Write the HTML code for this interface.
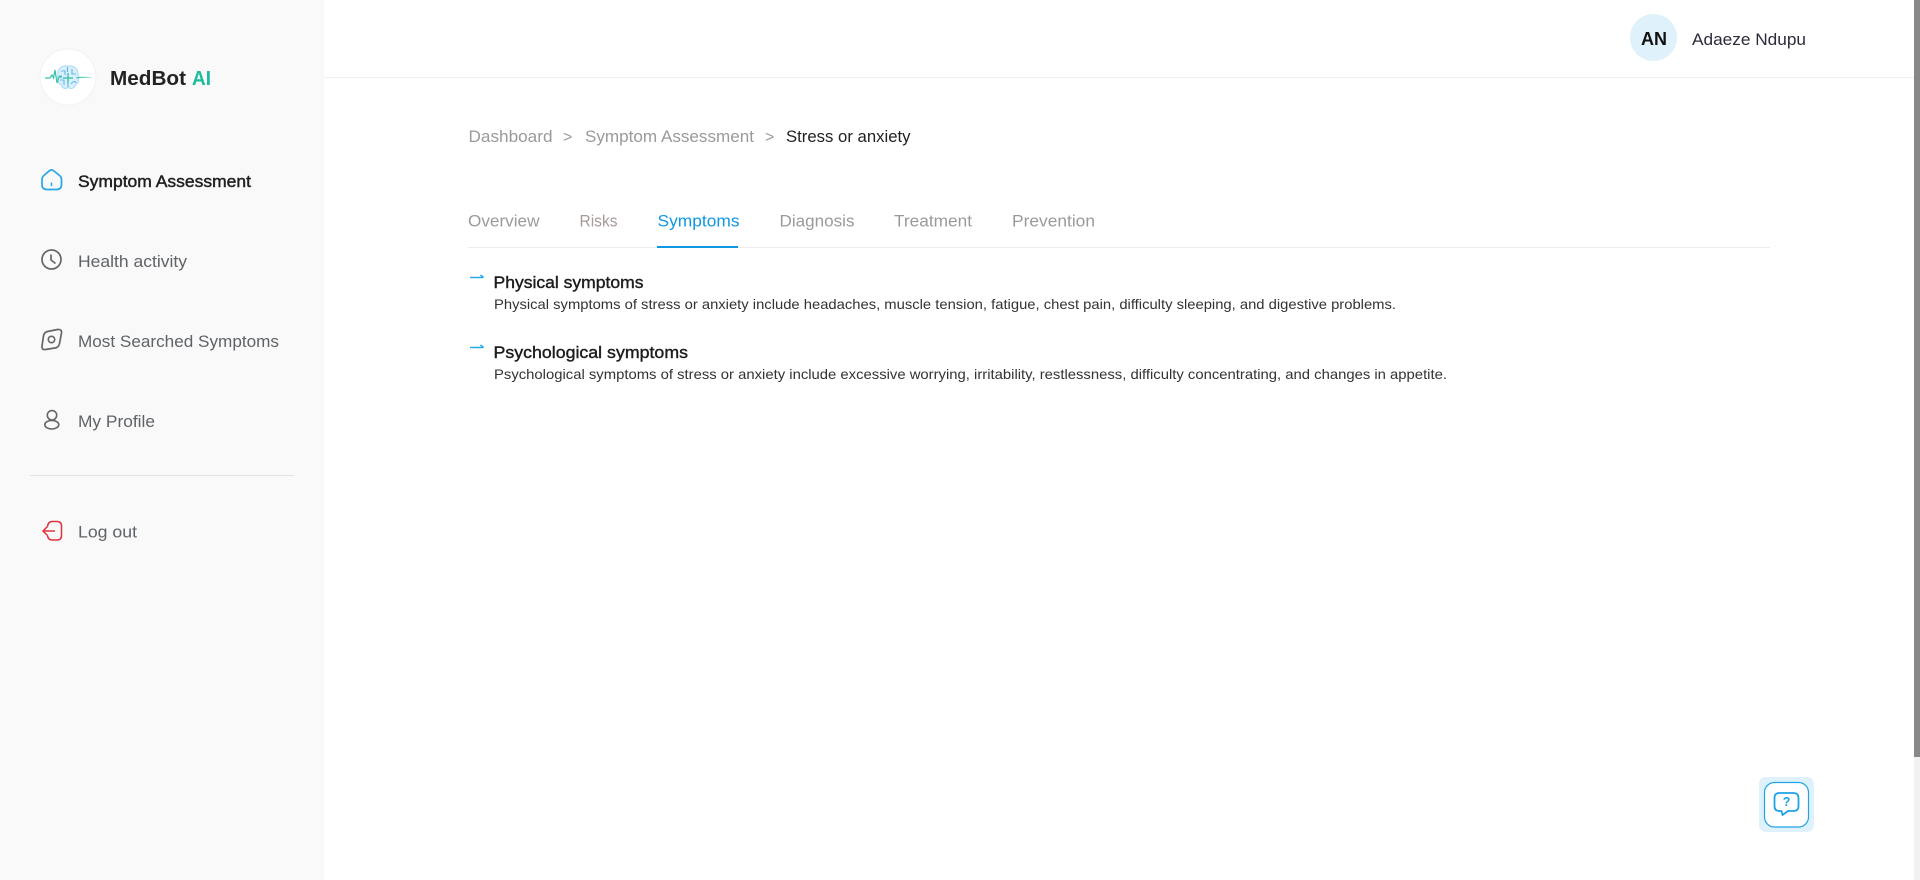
<!DOCTYPE html>
<html lang="en">
<head>
<meta charset="utf-8">
<title>MedBot AI</title>
<style>
html,body{margin:0;padding:0;width:1920px;height:880px;overflow:hidden;background:#fff}
svg{display:block;position:absolute;left:0;top:0}
text{font-family:"Liberation Sans",sans-serif}
</style>
</head>
<body>
<svg width="1920" height="880" viewBox="0 0 1920 880" xmlns="http://www.w3.org/2000/svg">
<defs>
<linearGradient id="p" x1="0" x2="1" y1="0" y2="0">
<stop offset="0" stop-color="#35c3a6"/>
<stop offset=".4" stop-color="#35c3a6"/>
<stop offset="1" stop-color="#bfeee4"/>
</linearGradient>
</defs>
<rect width="1920" height="880" fill="#fff"/>
<rect width="324" height="880" fill="#f9f9f9"/>
<rect x="324" y="77" width="1590" height="1" fill="#f0f0f0"/>
<rect x="1914" width="6" height="880" fill="#f1f1f1"/>
<rect x="1914" width="6" height="757" fill="#888"/>

<!-- logo -->
<circle cx="68" cy="77" r="28" fill="#fff" stroke="#f2f2f2"/>
<path d="M67 66C61 65 57.500 70 58 74C56.500 78 58 83 61 85C63 89.500 67 89 68 87C70 89.500 74 89 75.500 85C78.500 83 79.500 78 78 74C78.500 69 73 65 68 66Z" fill="#d9effb" stroke="#a6daf5" stroke-width="1"/>
<path d="M61 71H65V75M60 80H64V85M72 69V74H76M71 84C73 81 76 81 76 83M62 76H59M67.500 67V72M68 83V87" fill="none" stroke="#62b9ec" stroke-width="1.100"/>
<path d="M45 78H50L52 75L53.500 78L55 70L57 83L59 77H62" fill="none" stroke="#35c3a6" stroke-width="1.200"/>
<path d="M76 78C81 77 86 77 92 78" fill="none" stroke="url(#p)" stroke-width="1"/>
<path d="M63 78H73M68 73V83" fill="none" stroke="#33bfa5" stroke-width="1.300"/>
<text x="110" y="85" font-size="20" font-weight="700" fill="#222" textLength="76" lengthAdjust="spacingAndGlyphs">MedBot</text>
<text x="192" y="85" font-size="20" font-weight="700" fill="#1dbb9f" textLength="19" lengthAdjust="spacingAndGlyphs">AI</text>

<!-- nav icons -->
<path d="M42 179.500Q42 177 44 175.500L49 171Q51.500 168.800 54 171L59.500 175.500Q61.500 177 61.500 179.500V184.500Q61.500 189.500 56.500 189.500H47Q42 189.500 42 184.500Z" fill="none" stroke="#27a5e8" stroke-width="1.700"/>
<path d="M51.500 182.500V186" stroke="#27a5e8" stroke-width="1.500" fill="none"/>
<circle cx="51.500" cy="259.500" r="9.500" fill="none" stroke="#666" stroke-width="1.700"/>
<path d="M51 254.500V260L55.500 263.500" fill="none" stroke="#666" stroke-width="1.700"/>
<path d="M47.500 331.500L57.500 329.500Q62 329 61.500 333L59.500 343.500Q58.800 347.500 55 348L45.500 349.500Q41.500 350 42 346L43.500 336Q44 332.500 47.500 331.500Z" fill="none" stroke="#666" stroke-width="1.700"/>
<circle cx="51.500" cy="339.500" r="3.200" fill="none" stroke="#666" stroke-width="1.600"/>
<circle cx="52" cy="415.300" r="4.700" fill="none" stroke="#666" stroke-width="1.600"/>
<ellipse cx="51.800" cy="424.700" rx="7" ry="4.300" fill="none" stroke="#666" stroke-width="1.600"/>
<path d="M47.500 526.500Q48 521.500 52.500 521.500H57Q61.500 521.500 61.500 526V535.500Q61.500 540 57 540H52.500Q48 540 47.500 535.500M55 531H43M47.500 526.500L43 531L47.500 535.500" fill="none" stroke="#e0323c" stroke-width="1.500"/>

<!-- nav -->
<text x="78" y="187" font-size="17" fill="#1f1f1f" stroke="#1f1f1f" stroke-width=".45" textLength="173" lengthAdjust="spacingAndGlyphs">Symptom Assessment</text>
<text x="78" y="267" font-size="17" fill="#5f6368" textLength="109" lengthAdjust="spacingAndGlyphs">Health activity</text>
<text x="78" y="347" font-size="17" fill="#5f6368" textLength="201" lengthAdjust="spacingAndGlyphs">Most Searched Symptoms</text>
<text x="78" y="427" font-size="17" fill="#5f6368" textLength="77" lengthAdjust="spacingAndGlyphs">My Profile</text>
<rect x="30" y="475" width="264" height="1" fill="#e3e3e3"/>
<text x="78" y="537.500" font-size="17" fill="#5f6368" textLength="59" lengthAdjust="spacingAndGlyphs">Log out</text>

<!-- header -->
<circle cx="1653.500" cy="37.500" r="23.500" fill="#dff1fa"/>
<text x="1641" y="45" font-size="18" font-weight="700" fill="#111" textLength="26" lengthAdjust="spacingAndGlyphs">AN</text>
<text x="1692" y="45" font-size="17" fill="#2b2b3a" textLength="114" lengthAdjust="spacingAndGlyphs">Adaeze Ndupu</text>

<!-- breadcrumb -->
<text x="468.500" y="142" font-size="17" fill="#9a9a9a" textLength="84" lengthAdjust="spacingAndGlyphs">Dashboard</text>
<text x="563" y="142" font-size="16" fill="#9a9a9a">&gt;</text>
<text x="585" y="142" font-size="17" fill="#9a9a9a" textLength="169" lengthAdjust="spacingAndGlyphs">Symptom Assessment</text>
<text x="765" y="142" font-size="16" fill="#9a9a9a">&gt;</text>
<text x="786" y="142" font-size="17" fill="#222" textLength="124.500" lengthAdjust="spacingAndGlyphs">Stress or anxiety</text>

<!-- tabs -->
<text x="468" y="226.500" font-size="17" fill="#9a9a9a" textLength="71.500" lengthAdjust="spacingAndGlyphs">Overview</text>
<text x="579.500" y="226.500" font-size="17" fill="#a89a9a" textLength="38" lengthAdjust="spacingAndGlyphs">Risks</text>
<text x="657.500" y="226.500" font-size="17" fill="#0f97e2" textLength="82" lengthAdjust="spacingAndGlyphs">Symptoms</text>
<text x="779.500" y="226.500" font-size="17" fill="#9a9a9a" textLength="75" lengthAdjust="spacingAndGlyphs">Diagnosis</text>
<text x="894" y="226.500" font-size="17" fill="#9a9a9a" textLength="78" lengthAdjust="spacingAndGlyphs">Treatment</text>
<text x="1012" y="226.500" font-size="17" fill="#9a9a9a" textLength="83" lengthAdjust="spacingAndGlyphs">Prevention</text>
<rect x="468" y="247" width="1302" height="1" fill="#ececec"/>
<rect x="657" y="246" width="81" height="2" fill="#0f97e2"/>

<!-- content -->
<path d="M470 277.500H483.500M480.500 275L483.500 277.500" fill="none" stroke="#2aa9e8" stroke-width="1.600"/>
<text x="493.500" y="288" font-size="17" fill="#1c1c1c" stroke="#1c1c1c" stroke-width=".4" textLength="150" lengthAdjust="spacingAndGlyphs">Physical symptoms</text>
<text x="494" y="309" font-size="14" fill="#333" textLength="902" lengthAdjust="spacingAndGlyphs">Physical symptoms of stress or anxiety include headaches, muscle tension, fatigue, chest pain, difficulty sleeping, and digestive problems.</text>
<path d="M470 347.500H483.500M480.500 345L483.500 347.500" fill="none" stroke="#2aa9e8" stroke-width="1.600"/>
<text x="493.500" y="358" font-size="17" fill="#1c1c1c" stroke="#1c1c1c" stroke-width=".4" textLength="194.500" lengthAdjust="spacingAndGlyphs">Psychological symptoms</text>
<text x="494" y="379" font-size="14" fill="#333" textLength="953" lengthAdjust="spacingAndGlyphs">Psychological symptoms of stress or anxiety include excessive worrying, irritability, restlessness, difficulty concentrating, and changes in appetite.</text>

<!-- help -->
<rect x="1759" y="777" width="55" height="55" rx="7" fill="#dff1fb"/>
<rect x="1764.500" y="782.500" width="44" height="44.500" rx="10" fill="#fff" stroke="#1fa3e6" stroke-width="1.200"/>
<path d="M1779.500 793H1793.500Q1798.500 793 1798.500 798V806Q1798.500 811 1793.500 811H1788L1782.500 815L1781.500 811H1779.500Q1774.500 811 1774.500 806V798Q1774.500 793 1779.500 793Z" fill="none" stroke="#1fa3e6" stroke-width="1.800" stroke-linejoin="round"/>
<text x="1782.700" y="806" font-size="12.500" font-weight="700" fill="#1fa3e6">?</text>
</svg>
</body>
</html>
